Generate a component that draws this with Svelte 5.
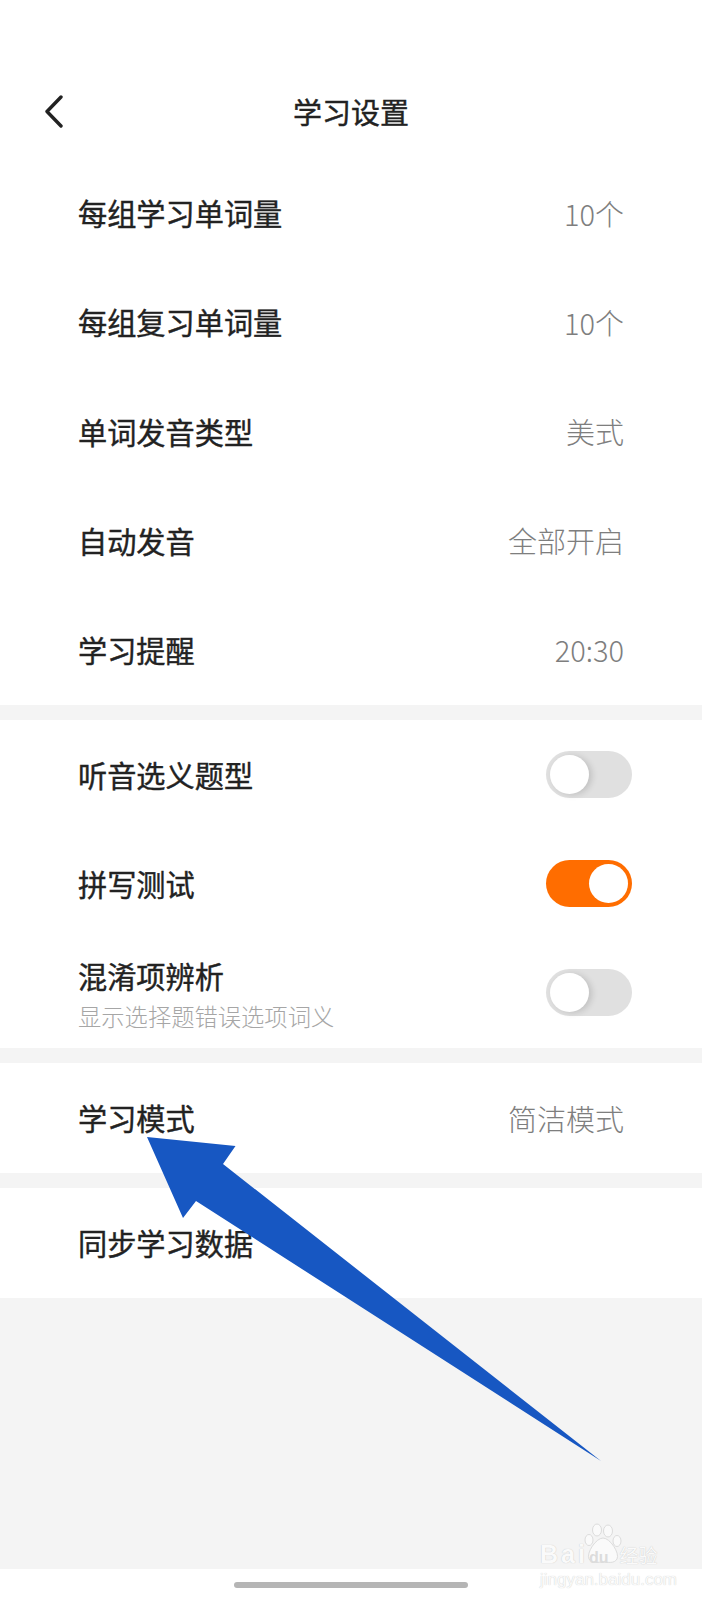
<script>
	const groups = [
		[
			{ label: "每组学习单词量", value: "10个" },
			{ label: "每组复习单词量", value: "10个" },
			{ label: "单词发音类型", value: "美式" },
			{ label: "自动发音", value: "全部开启" },
			{ label: "学习提醒", value: "20:30" }
		],
		[
			{ label: "听音选义题型", on: false },
			{ label: "拼写测试", on: true },
			{ label: "混淆项辨析", sub: "显示选择题错误选项词义", on: false }
		],
		[{ label: "学习模式", value: "简洁模式" }],
		[{ label: "同步学习数据" }]
	];
</script>

<div class="page">
	<header class="topbar">
		<button class="back" aria-label="返回">
			<svg width="19" height="33" viewBox="0 0 19 33">
				<path d="M17 2 L3 16.5 L17 31" fill="none" stroke="#222" stroke-width="3.4" stroke-linecap="round" stroke-linejoin="round" />
			</svg>
		</button>
		<h1>学习设置</h1>
	</header>

	<main class="groups">
		{#each groups as rows}
			<section class="group">
				{#each rows as row}
					<div class="row">
						<div class="text">
							<span class="label">{row.label}</span>
							{#if row.sub}
								<span class="sub">{row.sub}</span>
							{/if}
						</div>
						{#if row.value}
							<span class="value">{row.value}</span>
						{:else if row.on !== undefined}
							<span class={"toggle" + (row.on ? " on" : "")}><i class="knob"></i></span>
						{/if}
					</div>
				{/each}
			</section>
		{/each}
	</main>

	<footer class="homebar"><i></i></footer>

	<svg class="arrow" width="702" height="1600" viewBox="0 0 702 1600">
		<polygon points="147,1137 235.5,1146 223,1164 601,1461 196,1201 183,1218" fill="#1757c2" />
	</svg>

	<div class="watermark">
		<svg class="paw" width="38" height="42" viewBox="0 0 38 42">
			<g fill="#fafafa" stroke="#dcdcdc" stroke-width="1">
				<ellipse cx="13" cy="7" rx="4.5" ry="6" />
				<ellipse cx="24" cy="8" rx="4.5" ry="6" />
				<ellipse cx="5" cy="17" rx="4" ry="5.5" />
				<ellipse cx="33" cy="18" rx="4" ry="5.5" />
				<path d="M19 15 C26 15 36 30 33 36 C30 41 24 39 19 39 C14 39 8 41 5 36 C2 30 12 15 19 15 Z" />
			</g>
		</svg>
		<div class="brand"><span class="bai">Bai</span><span class="du">du</span><span class="cn">经验</span></div>
		<div class="url">jingyan.baidu.com</div>
	</div>
</div>

<style>
	:global(body) {
		margin: 0;
	}

	.page {
		position: relative;
		width: 702px;
		height: 1600px;
		display: flex;
		flex-direction: column;
		background: #f4f4f4;
		overflow: hidden;
		font-family: "Noto Sans CJK SC", "Noto Sans", sans-serif;
		color: #222;
	}

	.topbar {
		height: 93.6px;
		padding-top: 65px;
		display: flex;
		align-items: center;
		justify-content: center;
		position: relative;
		background: #fff;
	}

	.topbar h1 {
		margin: -2px 0 0;
		font-size: 29px;
		font-weight: 400;
		-webkit-text-stroke: 0.4px #222;
		line-height: 94px;
	}

	.back {
		position: absolute;
		left: 44px;
		top: 95px;
		padding: 0;
		border: 0;
		background: none;
		display: block;
		line-height: 0;
	}

	.groups {
		flex: 1;
		display: flex;
		flex-direction: column;
		gap: 15.7px;
	}

	.group {
		background: #fff;
	}

	.row {
		height: 109.2px;
		padding: 0 70px 0 78px;
		display: flex;
		align-items: center;
		justify-content: space-between;
		box-sizing: border-box;
	}

	.text {
		display: flex;
		flex-direction: column;
		margin-top: -2px;
	}

	.label {
		font-size: 29.2px;
		font-weight: 400;
		-webkit-text-stroke: 0.4px #222;
		line-height: 38px;
		color: #222;
	}

	.sub {
		font-size: 23.3px;
		font-weight: 300;
		line-height: 32px;
		color: #a6a6a6;
		margin-top: 6px;
		margin-bottom: -4px;
	}

	.value {
		font-size: 29px;
		font-weight: 300;
		color: #7e7e7e;
		margin-right: 8px;
		margin-top: -1px;
	}

	.toggle {
		width: 86px;
		height: 47px;
		border-radius: 24px;
		background: #e0e0e0;
		box-sizing: border-box;
		padding: 4px;
		margin-top: -1px;
		display: flex;
		justify-content: flex-start;
	}

	.toggle.on {
		background: #ff6d00;
		justify-content: flex-end;
	}

	.knob {
		width: 39px;
		height: 39px;
		border-radius: 50%;
		background: #fff;
		box-shadow: 3px 1px 6px rgba(0, 0, 0, 0.14);
	}

	.toggle.on .knob {
		box-shadow: none;
	}

	.homebar {
		height: 31px;
		background: #fff;
		display: flex;
		justify-content: center;
		align-items: flex-start;
	}

	.homebar i {
		display: block;
		width: 234px;
		height: 6px;
		margin-top: 13px;
		border-radius: 3px;
		background: #b5b5b5;
	}

	.arrow {
		position: absolute;
		left: 0;
		top: 0;
		pointer-events: none;
	}

	.watermark {
		position: absolute;
		left: 538px;
		top: 1520px;
		width: 130px;
		height: 70px;
		color: #fafafa;
		font-family: "Liberation Sans", sans-serif;
	}

	.paw {
		position: absolute;
		left: 46px;
		top: 3px;
	}

	.brand {
		position: absolute;
		left: 2px;
		top: 18px;
		display: flex;
		align-items: baseline;
		font-size: 25px;
		font-weight: 700;
		line-height: 32px;
		text-shadow: 0 0 1px #bdbdbd;
	}

	.bai {
		letter-spacing: 3px;
	}

	.du {
		color: #dcdcdc;
		font-size: 16px;
		margin-left: 1px;
		text-shadow: none;
	}

	.cn {
		font-family: "Noto Sans CJK SC", sans-serif;
		font-size: 19px;
		font-weight: 400;
		margin-left: 11px;
	}

	.url {
		position: absolute;
		left: 2px;
		top: 51px;
		font-size: 17px;
		line-height: 18px;
		white-space: nowrap;
		text-shadow: 0 0 1px #c4c4c4;
	}
</style>
